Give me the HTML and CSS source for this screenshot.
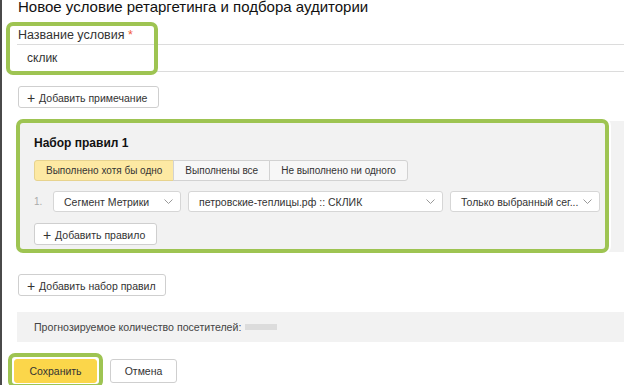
FILE: index.html
```html
<!DOCTYPE html>
<html lang="ru">
<head>
    <meta charset="UTF-8">
    <title>Новое условие ретаргетинга</title>
    <link rel="stylesheet" href="styles.css">
</head>
<body>
    <div class="page">
        <h1 class="title">Новое условие ретаргетинга и подбора аудитории</h1>

        <div class="field">
            <label class="field-label">Название условия <span class="req">*</span></label>
            <div class="text-input">склик</div>
            <div class="mark mark-name"></div>
        </div>

        <button class="btn btn-note"><span class="plus">+</span> Добавить примечание</button>

        <!-- Набор правил -->
        <div class="ruleset">
            <h3 class="ruleset-title">Набор правил 1</h3>
            <div class="tabs">
                <div class="tab active">Выполнено хотя бы одно</div>
                <div class="tab">Выполнены все</div>
                <div class="tab">Не выполнено ни одного</div>
            </div>
            <div class="rule-row">
                <span class="rule-num">1.</span>
                <div class="select sel-type">
                    <span>Сегмент Метрики</span>
                    <svg class="chev" width="9" height="5" viewBox="0 0 9 5"><polyline points="0.5,0.5 4.5,4.5 8.5,0.5" /></svg>
                </div>
                <div class="select sel-segment">
                    <span>петровские-теплицы.рф :: СКЛИК</span>
                    <svg class="chev" width="9" height="5" viewBox="0 0 9 5"><polyline points="0.5,0.5 4.5,4.5 8.5,0.5" /></svg>
                </div>
                <div class="select sel-mode">
                    <span>Только выбранный сег...</span>
                    <svg class="chev" width="9" height="5" viewBox="0 0 9 5"><polyline points="0.5,0.5 4.5,4.5 8.5,0.5" /></svg>
                </div>
            </div>
            <button class="btn btn-rule"><span class="plus">+</span> Добавить правило</button>
            <div class="mark mark-ruleset"></div>
        </div>

        <button class="btn btn-ruleset"><span class="plus">+</span> Добавить набор правил</button>

        <div class="forecast">
            <span>Прогнозируемое количество посетителей:</span>
            <span class="forecast-value"></span>
        </div>

        <div class="actions">
            <div class="save-wrap">
                <button class="btn btn-save">Сохранить</button>
                <div class="mark mark-save"></div>
            </div>
            <button class="btn btn-cancel">Отмена</button>
        </div>
    </div>
</body>
</html>
```

FILE: styles.css
```css
html, body {
    margin: 0;
    padding: 0;
    background-color: white;
    overflow: hidden;
}

body {
    font-family: "Liberation Sans", Arial, sans-serif;
    color: #222;
}

.page {
    border-left: 2px solid #4a4a4a;
    padding-left: 16px;
    height: 387px;
    box-sizing: border-box;
}

.title {
    font-size: 15px;
    font-weight: normal;
    line-height: 18px;
    margin: -2px 0 0 0;
    color: #111;
    white-space: nowrap;
}

.field {
    position: relative;
    margin-top: 8px;
    padding-top: 3px;
}

.field-label {
    display: block;
    font-size: 12.5px;
    line-height: 16px;
    margin-bottom: 1px;
    color: #333;
}

.req {
    color: #f25b3a;
}

.text-input {
    margin-left: -1px;
    height: 26px;
    line-height: 26px;
    padding-left: 10px;
    border-top: 1px solid #dcdcdc;
    border-bottom: 1px solid #dcdcdc;
    font-size: 12px;
    color: #333;
}

/* зелёные рамки-выделения поверх формы */
.mark {
    position: absolute;
    border: 4px solid #9ec452;
    border-radius: 7px;
    box-sizing: border-box;
    pointer-events: none;
}

.mark-name {
    left: -12px;
    top: -2px;
    width: 152px;
    height: 53px;
}

.mark-ruleset {
    left: -4px;
    top: -2px;
    width: 593px;
    height: 134px;
    box-shadow: 0 0 0 2px white;
}

.mark-save {
    left: -6px;
    top: -6px;
    width: 95px;
    height: 35px;
}

.btn {
    display: block;
    font-family: inherit;
    font-size: 10.5px;
    color: #333;
    background-color: white;
    border: 1px solid #cfcfcf;
    border-radius: 3px;
    height: 22px;
    padding: 0 0 0 8px;
    text-align: left;
    white-space: nowrap;
    cursor: pointer;
}

.plus {
    font-size: 14px;
    margin-right: 1px;
    position: relative;
    top: 1px;
}

.btn-note {
    margin-top: 14px;
    width: 141px;
}

.ruleset {
    position: relative;
    margin-top: 13px;
    margin-left: 2px;
    background-color: #f2f2f2;
    padding: 14px 0 7px 14px;
}

.ruleset-title {
    margin: 0 0 9px 0;
    font-size: 12px;
    line-height: 16px;
    color: #111;
}

.tabs {
    display: flex;
    height: 21px;
}

.tab {
    font-size: 10px;
    line-height: 19px;
    padding: 0 11px;
    border: 1px solid #d2d2d2;
    background-color: #f7f7f7;
    color: #333;
    margin-left: -1px;
    white-space: nowrap;
}

.tab:first-child {
    margin-left: 0;
    border-radius: 3px 0 0 3px;
}

.tab:last-child {
    border-radius: 0 3px 3px 0;
}

.tab.active {
    background-color: #fde9a3;
    border-color: #e7d38e;
}

.rule-row {
    display: flex;
    align-items: center;
    margin-top: 10px;
    height: 21px;
}

.rule-num {
    font-size: 10px;
    color: #aaa;
    width: 19px;
}

.select {
    display: flex;
    align-items: center;
    justify-content: space-between;
    height: 21px;
    box-sizing: border-box;
    background-color: white;
    border: 1px solid #d6d6d6;
    border-radius: 3px;
    padding: 0 7px 0 10px;
    font-size: 10.5px;
    color: #333;
    margin-right: 7px;
    white-space: nowrap;
}

.chev {
    fill: none;
    stroke: #999;
    stroke-width: 1;
    flex-shrink: 0;
}

.sel-type {
    width: 128px;
}

.sel-segment {
    width: 255px;
}

.sel-mode {
    width: 150px;
}

.btn-rule {
    margin-top: 11px;
    width: 123px;
}

.btn-ruleset {
    margin-top: 22px;
    width: 148px;
}

.forecast {
    display: flex;
    align-items: center;
    margin-top: 16px;
    margin-left: -1px;
    height: 30px;
    background-color: #f2f2f2;
    padding-left: 17px;
    font-size: 10.6px;
    color: #444;
}

.forecast-value {
    display: inline-block;
    width: 32px;
    height: 6px;
    margin-left: 4px;
    background-color: #dcdcdc;
}

.actions {
    display: flex;
    margin-top: 17px;
    margin-left: -4px;
}

.save-wrap {
    position: relative;
}

.btn-save {
    width: 83px;
    height: 24px;
    text-align: center;
    padding: 0;
    background-color: #fbd64a;
    border-color: #fbd64a;
}

.btn-cancel {
    width: 67px;
    height: 24px;
    text-align: center;
    padding: 0;
    margin-left: 13px;
}
```
